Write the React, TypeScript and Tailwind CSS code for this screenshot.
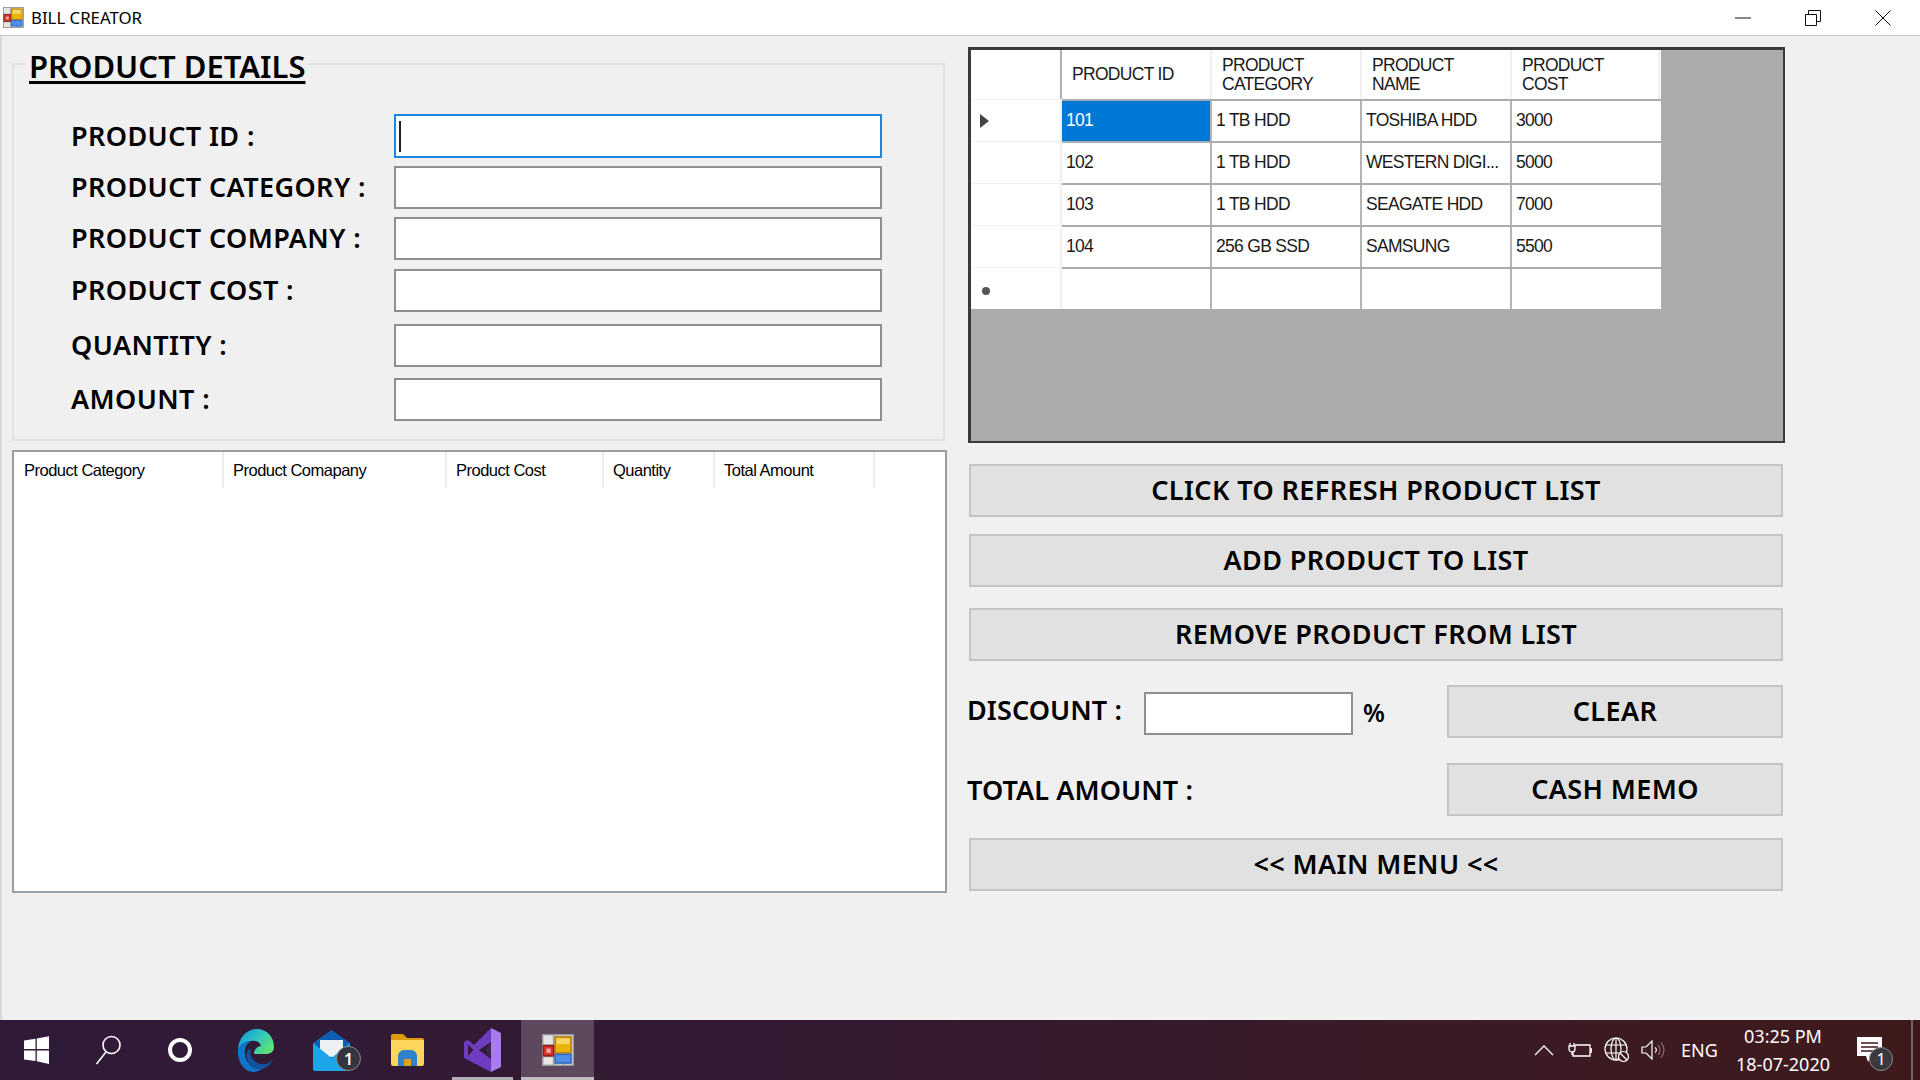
import React from 'react';

const tahoma = "font-['Noto_Sans','Open_Sans',sans-serif]";
const arial = "font-['Liberation_Sans',Arial,sans-serif]";

const fields = [
  { label: 'PRODUCT ID :', row: 'h-[44px] mb-[8px]', focused: true },
  { label: 'PRODUCT CATEGORY :', row: 'h-[43px] mb-[8px]' },
  { label: 'PRODUCT COMPANY :', row: 'h-[43px] mb-[9px]' },
  { label: 'PRODUCT COST :', row: 'h-[43px] mb-[12px]' },
  { label: 'QUANTITY :', row: 'h-[43px] mb-[11px]' },
  { label: 'AMOUNT :', row: 'h-[43px] mb-0' },
];

const listColumns = [
  { name: 'Product Category', width: 'w-[209px]' },
  { name: 'Product Comapany', width: 'w-[223px]' },
  { name: 'Product Cost', width: 'w-[157px]' },
  { name: 'Quantity', width: 'w-[111px]' },
  { name: 'Total Amount', width: 'w-[160px]' },
];

const gridHeaders = [['PRODUCT ID'], ['PRODUCT', 'CATEGORY'], ['PRODUCT', 'NAME'], ['PRODUCT', 'COST']];

const gridRows = [
  ['101', '1 TB HDD', 'TOSHIBA HDD', '3000'],
  ['102', '1 TB HDD', 'WESTERN DIGI...', '5000'],
  ['103', '1 TB HDD', 'SEAGATE HDD', '7000'],
  ['104', '256 GB SSD', 'SAMSUNG', '5500'],
  ['', '', '', ''],
];

function AppIcon({ size }: { size: number }) {
  return (
    <svg width={size} height={size} viewBox="0 0 22 22">
      <rect x="0.5" y="0.5" width="21" height="21" fill="#e5e5e5" stroke="#9a9a9a" />
      <path d="M8 .5v7M.5 7.5H8M8 15v6.5M.5 15.5H8M14.5 14v7.5" stroke="#9a9a9a" fill="none" />
      <rect x="9" y="2" width="11" height="11" fill="#eab308" stroke="#b07a08" />
      <rect x="10" y="3" width="9" height="4" fill="#f6d96b" />
      <rect x="1" y="8" width="7" height="7" fill="#d9362b" stroke="#8f1d16" />
      <rect x="3" y="10" width="3" height="3" fill="#f3a49c" />
      <rect x="9" y="14" width="11" height="6" fill="#4f8fe8" stroke="#2f66b8" />
    </svg>
  );
}

function Button({ children, className }: { children: React.ReactNode; className: string }) {
  return (
    <button className={`h-[53px] bg-[#e1e1e1] border-2 border-[#c4c4c4] text-[27px] font-semibold tracking-[0.4px] text-black text-center ${tahoma} ${className}`}>
      {children}
    </button>
  );
}

function Taskbar() {
  return (
    <footer className="h-[60px] bg-gradient-to-r from-[#2f1a38] via-[#351a30] to-[#3f1a1b] flex items-center text-white shrink-0">
      <div className="w-[72px] h-full flex items-center justify-center">
        <svg width="25" height="30" viewBox="0 0 25 30" fill="#fff">
          <path d="M0 5.500 11.500 3.700V14H0zM12.800 3.500 25 1.200V14H12.800zM0 15.500h11.500v10.600L0 24.400zM12.800 15.500H25v13.400l-12.200-2.600z" />
        </svg>
      </div>
      <div className="w-[72px] h-full flex items-center justify-center">
        <svg width="26" height="30" viewBox="0 0 26 30" fill="none" stroke="#fff" strokeWidth="1.6">
          <circle cx="16.500" cy="10" r="8.500" />
          <path d="M11 17 1.500 29" />
        </svg>
      </div>
      <div className="w-[72px] h-full flex items-center justify-center">
        <div className="w-[24px] h-[24px] rounded-full border-[4px] border-white" />
      </div>
      <div className="w-[77px] ml-[1px] h-full flex items-center justify-center">
        <svg width="38" height="44" viewBox="0 0 38 44">
          <defs>
            <linearGradient id="edgeA" x1="0" y1="0" x2="1" y2="0.6">
              <stop offset="0" stopColor="#0c8fd8" />
              <stop offset="0.55" stopColor="#2fc4c0" />
              <stop offset="1" stopColor="#5be07a" />
            </linearGradient>
          </defs>
          <path d="M1 21C2 9 10 1 20 1c10 0 17 8 17 18 0 5-4 7-8 7H17c0-5 4-8 7-8-1-4-5-6-10-5C8 14 3 17 1 21z" fill="url(#edgeA)" />
          <path d="M1 21c2-5 7-8 13-8-5 3-7 8-6 14 1 8 8 15 17 14-3 2-6 3-9 3C7 44 0 33 1 21z" fill="#0f75c9" />
          <path d="M14 21c-2 7 2 14 10 15 5 1 9-1 12-5-2 6-8 11-15 10C13 40 8 32 10 24c1-2 2-3 4-3z" fill="#10539e" />
        </svg>
      </div>
      <div className="relative w-[75px] h-full flex items-center justify-center">
        <svg width="37" height="42" viewBox="0 0 37 42">
          <path d="M0 14 18.500 1 37 14v6H0z" fill="#0c5fb0" />
          <path d="M7 11h23v17H7z" fill="#eef1f4" />
          <path d="M0 14v26a2 2 0 0 0 2 2h33a2 2 0 0 0 2-2V14L18.500 29z" fill="#1ca5e8" />
        </svg>
        <span className={`absolute left-[42px] top-[26px] w-[25px] h-[25px] rounded-full bg-[#35353f] border border-[#8c8c8c] flex items-center justify-center text-[16px] font-semibold ${tahoma}`}>1</span>
      </div>
      <div className="w-[73px] ml-[2px] h-full flex items-center justify-center">
        <svg width="33" height="32" viewBox="0 0 33 32">
          <path d="M0 2a2 2 0 0 1 2-2h10l4 4h15a2 2 0 0 1 2 2v6H0z" fill="#dd9a0c" />
          <path d="M0 6h33v24a2 2 0 0 1-2 2H2a2 2 0 0 1-2-2z" fill="#fcd65c" />
          <path d="M7 32V22a6 6 0 0 1 6-6h7a6 6 0 0 1 6 6v10h-6v-7h-7v7z" fill="#2e82cc" />
          <rect x="13" y="25" width="7" height="7" fill="#dca21c" />
        </svg>
      </div>
      <div className="relative w-[69px] ml-[4px] h-full flex items-center justify-center">
        <svg width="37" height="44" viewBox="0 0 37 44">
          <path d="M27 0 37 5v34l-10 5-17-17 17-13z" fill="#a97cec" />
          <path d="M27 0v44L0 30V14l4-2 6 5L27 0z" fill="#6f3cc0" />
          <path d="M4 16.500v11l5.500-5.500zM27 14 15 22l12 9z" fill="#2f1a38" />
          <path d="M27 14v16l-6-8z" fill="#3b2548" />
        </svg>
        <span className="absolute bottom-0 left-[4px] w-[61px] h-[3px] bg-[#b5aeb7]" />
      </div>
      <div className="relative w-[73px] ml-[4px] h-full bg-[#5e485e] flex items-center justify-center">
        <AppIcon size={32} />
        <span className="absolute bottom-0 left-0 w-full h-[3px] bg-[#c3bcc3]" />
      </div>

      <div className="ml-auto flex items-center h-full">
        <svg width="20" height="12" viewBox="0 0 20 12" fill="none" stroke="#fff" strokeWidth="1.3" className="mr-[14px]">
          <path d="M1 11 10 2l9 9" />
        </svg>
        <svg width="24" height="16" viewBox="0 0 24 16" fill="none" stroke="#fff" strokeWidth="1.3" className="mr-[12px]">
          <path d="M7 3h15v11H5v-4M22 7h1.500v3H22M2 1v3M6 1v3M1 4h6v3a3 3 0 0 1-6 0zM4 10v3" />
        </svg>
        <svg width="26" height="26" viewBox="0 0 26 26" fill="none" stroke="#fff" strokeWidth="1.2" className="mr-[11px]">
          <circle cx="12" cy="12" r="11" />
          <ellipse cx="12" cy="12" rx="5" ry="11" />
          <path d="M1 8h22M1 16h22M12 1v22" />
          <circle cx="19.500" cy="19.500" r="5" fill="#3f1a1b" />
          <path d="m16 16 7 7" />
        </svg>
        <svg width="24" height="20" viewBox="0 0 24 20" fill="none" stroke="#fff" strokeWidth="1.2" className="mr-[16px]">
          <path d="M1 7h4l6-6v18l-6-6H1z" />
          <path d="M14 7.500a3 3 0 0 1 0 5" />
          <path d="M17 5a7 7 0 0 1 0 10M20 2.500a11 11 0 0 1 0 15" stroke="#8a6a6a" />
        </svg>
        <span className={`text-[18px] w-[36px] mr-[13px] ${tahoma}`}>ENG</span>
        <div className={`w-[110px] pr-[4px] text-center text-[18px] leading-[28px] ${tahoma}`}>
          <div>03:25 PM</div>
          <div>18-07-2020</div>
        </div>
        <div className="relative w-[62px] h-full flex items-center justify-center mr-[9px]">
          <svg width="26" height="30" viewBox="0 0 26 30" className="-translate-x-[1px]">
            <path d="M0 2h25v19H14l-3 6-2-6H0z" fill="#fff" />
            <path d="M4 8h17M4 12h17M4 16h12" stroke="#3f1a1b" strokeWidth="1.3" />
          </svg>
          <span className={`absolute left-[29px] top-[27px] w-[24px] h-[24px] rounded-full bg-[#3a3a3e] border border-[#8c8c8c] flex items-center justify-center text-[16px] ${tahoma}`}>1</span>
        </div>
        <div className="w-[2px] h-full bg-[#6e6666] mr-[7px]" />
      </div>
    </footer>
  );
}

export default function App() {
  return (
    <div className="w-[1920px] h-[1080px] flex flex-col bg-[#f0f0f0] overflow-hidden text-black">
      {/* Title bar */}
      <header className="h-[36px] bg-white border-b border-[#c2c2c2] flex items-center shrink-0">
        <div className="ml-[3px] mr-[7px]">
          <AppIcon size={21} />
        </div>
        <span className={`text-[16.800px] ${tahoma}`}>BILL CREATOR</span>
        <div className="ml-auto mr-[2px] flex items-center h-full">
          <div className="w-[71px] h-full flex items-center justify-center">
            <svg width="16" height="2" viewBox="0 0 16 2"><path d="M0 1h16" stroke="#111" /></svg>
          </div>
          <div className="w-[69px] h-full flex items-center justify-center">
            <svg width="16" height="16" viewBox="0 0 16 16" fill="none" stroke="#111">
              <path d="M.5 4.500h11v11H.5zM3.500 4.500v-4h12v11h-4" />
            </svg>
          </div>
          <div className="w-[71px] h-full flex items-center justify-center">
            <svg width="16" height="16" viewBox="0 0 16 16" fill="none" stroke="#111">
              <path d="m.5.500 15 15M15.500.500l-15 15" />
            </svg>
          </div>
        </div>
      </header>

      {/* Form body */}
      <main className="flex-1 flex border-l-2 border-[#d8d8d8]">
        <div className="w-[934px] ml-[10px] mt-[8px] shrink-0">
          <fieldset className="w-[933px] h-[397px] border-2 border-[#e3e3e3] pl-[57px] pt-[30px]">
            <legend className={`-ml-[45px] px-[3px] translate-y-[2px] text-[31px] leading-[40px] font-semibold underline underline-offset-[3px] decoration-[3px] ${tahoma}`}>
              PRODUCT DETAILS
            </legend>
            {fields.map(field => (
              <div key={field.label} className={`flex items-center ${field.row}`}>
                <span className={`w-[323px] text-[27px] font-semibold tracking-[0.4px] whitespace-nowrap ${tahoma}`}>{field.label}</span>
                <div className={`w-[488px] h-full bg-white border-2 ${field.focused ? 'border-[#1c86de]' : 'border-[#8f8f8f]'} flex items-center pl-[3px]`}>
                  {field.focused && <span className="w-[2px] h-[31px] bg-[#222]" />}
                </div>
              </div>
            ))}
          </fieldset>

          <div className="mt-[9px] w-[935px] h-[443px] bg-white border-2 border-[#9a9fa3]">
            <div className={`flex h-[36px] pl-[1px] text-[16.500px] tracking-[-0.5px] text-black ${arial}`}>
              {listColumns.map(col => (
                <div key={col.name} className={`${col.width} h-full pl-[9px] flex items-center border-r-2 border-[#ececec]`}>
                  {col.name}
                </div>
              ))}
            </div>
          </div>
        </div>

        <div className="ml-[21px] mt-[11px] w-[818px] shrink-0">
          {/* Product grid */}
          <div className="w-[817px] ml-[1px] h-[396px] bg-[#ababab] border-[3px] border-[#3a3a3a] border-b-2 border-r-2">
            <div className={`w-[690px] text-[17.500px] tracking-[-0.7px] text-[#1a1a1a] ${arial}`}>
              <div className="flex h-[49px] bg-white">
                <div className="w-[91px] border-r-2 border-[#b0b0b0]" />
                {gridHeaders.map((lines, i) => (
                  <div key={i} className={`${i === 3 ? 'w-[148px]' : 'w-[150px]'} border-r-2 border-[#f0f0f0] pl-[10px] flex flex-col justify-center leading-[19px]`}>
                    {lines.map(line => <div key={line}>{line}</div>)}
                  </div>
                ))}
              </div>
              {gridRows.map((row, r) => (
                <div key={r} className="flex h-[42px] bg-white border-t-2 border-[#ababab]">
                  <div className="w-[91px] border-r-2 border-[#b0b0b0] -mt-[2px] bg-white border-t border-[#f0f0f0] flex items-center pl-[9px]">
                    {r === 0 && (
                      <svg width="9" height="14" viewBox="0 0 9 14"><path d="M0 0 9 7 0 14z" fill="#444" /></svg>
                    )}
                    {r === 4 && <span className="w-[8px] h-[8px] rounded-full bg-[#555] ml-[2px] mt-[4px]" />}
                  </div>
                  {row.map((cell, c) => (
                    <div
                      key={c}
                      className={`${c === 3 ? 'w-[148px] border-white' : 'w-[150px] border-[#b4b4b4]'} border-r-2 pl-[4px] pb-[1px] flex items-center whitespace-nowrap ${r === 0 && c === 0 ? 'bg-[#0078d7] text-white' : ''}`}
                    >
                      {cell}
                    </div>
                  ))}
                </div>
              ))}
            </div>
          </div>

          <div className="flex flex-col mt-[21px]">
            <Button className="w-[814px] ml-[2px] mb-[17px]">CLICK TO REFRESH PRODUCT LIST</Button>
            <Button className="w-[814px] ml-[2px] mb-[21px]">ADD PRODUCT TO LIST</Button>
            <Button className="w-[814px] ml-[2px] mb-[24px]">REMOVE PRODUCT FROM LIST</Button>
          </div>

          <div className="flex items-center h-[53px]">
            <span className={`text-[27px] font-semibold tracking-[0.1px] w-[177px] pb-[2px] whitespace-nowrap ${tahoma}`}>DISCOUNT :</span>
            <div className="w-[209px] h-[43px] mt-[3px] bg-white border-2 border-[#8f8f8f]" />
            <span className={`ml-[10px] mt-[2px] text-[25px] font-semibold ${tahoma}`}>%</span>
            <Button className="w-[336px] ml-auto mr-[2px]">CLEAR</Button>
          </div>
          <div className="flex items-center h-[53px] mt-[25px]">
            <span className={`text-[27px] font-semibold tracking-[0.1px] pt-[2px] whitespace-nowrap ${tahoma}`}>TOTAL AMOUNT :</span>
            <Button className="w-[336px] ml-auto mr-[2px]">CASH MEMO</Button>
          </div>
          <Button className="w-[814px] ml-[2px] mt-[22px]">&lt;&lt; MAIN MENU &lt;&lt;</Button>
        </div>
      </main>

      <Taskbar />
    </div>
  );
}
